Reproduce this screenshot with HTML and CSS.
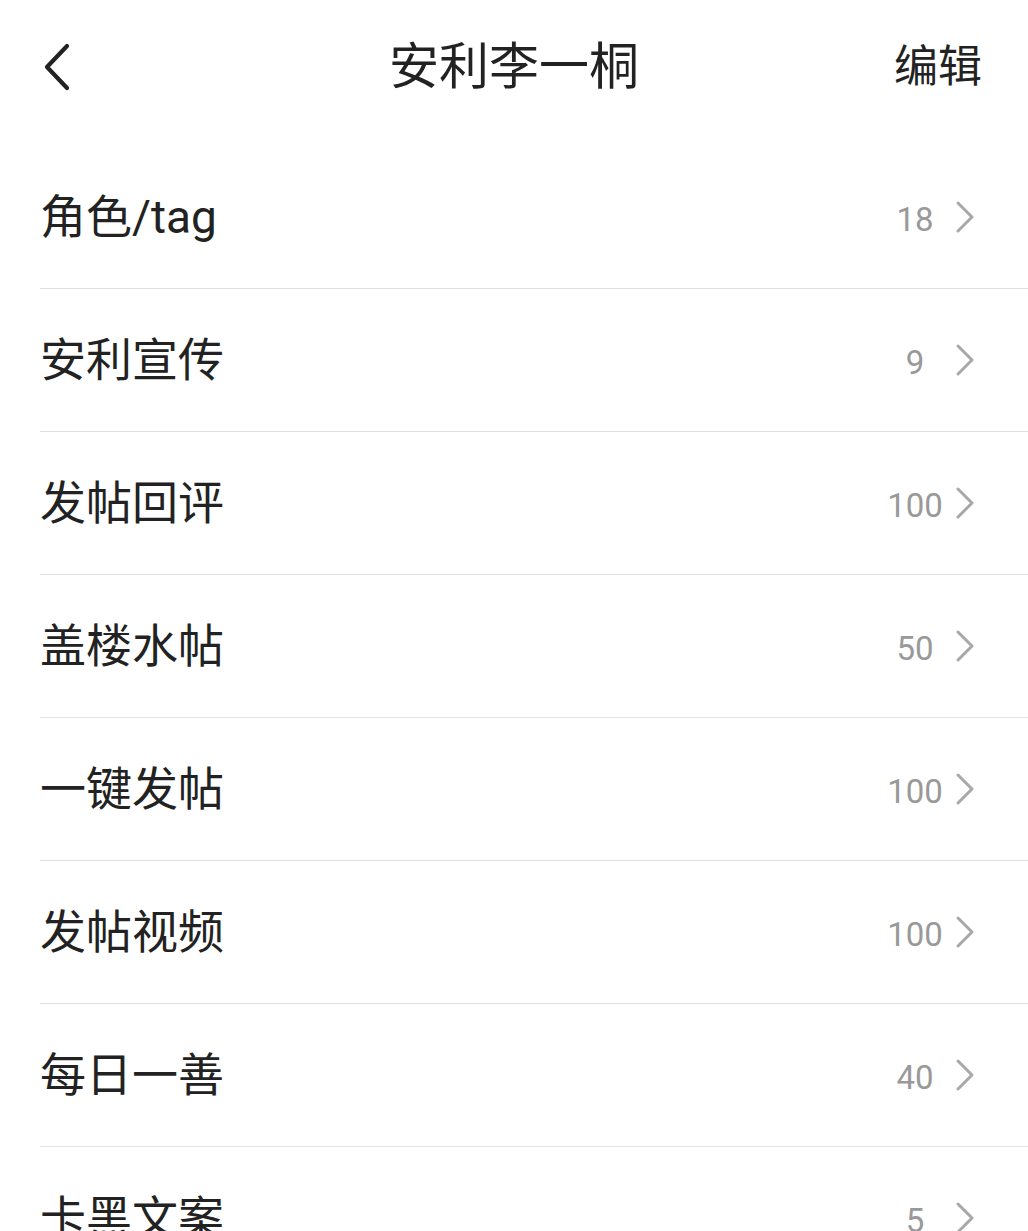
FILE: index.html
```html
<!DOCTYPE html>
<html lang="zh-CN">
<head>
    <meta charset="UTF-8">
    <meta name="viewport" content="width=device-width, initial-scale=1.0">
    <title>安利李一桐</title>
    <link rel="stylesheet" href="styles.css">
</head>
<body>

    <header class="topbar">
        <a class="back" href="#">
            <svg width="30" height="48" viewBox="0 0 30 48"><polyline points="25,3 5,24 25,45" fill="none" stroke="#222" stroke-width="4.2" stroke-linecap="round" stroke-linejoin="round"/></svg>
        </a>
        <h1 class="title">安利李一桐</h1>
        <a class="edit" href="#">编辑</a>
    </header>

    <!-- 任务列表 -->
    <ul class="list">
        <li class="row"><span class="name">角色/tag</span><span class="count">18</span><span class="arrow"><svg width="22" height="34" viewBox="0 0 22 34"><polyline points="4,3 18,17 4,31" fill="none" stroke="#a8a8a8" stroke-width="3" stroke-linecap="round" stroke-linejoin="round"/></svg></span></li>
        <li class="row"><span class="name">安利宣传</span><span class="count">9</span><span class="arrow"><svg width="22" height="34" viewBox="0 0 22 34"><polyline points="4,3 18,17 4,31" fill="none" stroke="#a8a8a8" stroke-width="3" stroke-linecap="round" stroke-linejoin="round"/></svg></span></li>
        <li class="row"><span class="name">发帖回评</span><span class="count">100</span><span class="arrow"><svg width="22" height="34" viewBox="0 0 22 34"><polyline points="4,3 18,17 4,31" fill="none" stroke="#a8a8a8" stroke-width="3" stroke-linecap="round" stroke-linejoin="round"/></svg></span></li>
        <li class="row"><span class="name">盖楼水帖</span><span class="count">50</span><span class="arrow"><svg width="22" height="34" viewBox="0 0 22 34"><polyline points="4,3 18,17 4,31" fill="none" stroke="#a8a8a8" stroke-width="3" stroke-linecap="round" stroke-linejoin="round"/></svg></span></li>
        <li class="row"><span class="name">一键发帖</span><span class="count">100</span><span class="arrow"><svg width="22" height="34" viewBox="0 0 22 34"><polyline points="4,3 18,17 4,31" fill="none" stroke="#a8a8a8" stroke-width="3" stroke-linecap="round" stroke-linejoin="round"/></svg></span></li>
        <li class="row"><span class="name">发帖视频</span><span class="count">100</span><span class="arrow"><svg width="22" height="34" viewBox="0 0 22 34"><polyline points="4,3 18,17 4,31" fill="none" stroke="#a8a8a8" stroke-width="3" stroke-linecap="round" stroke-linejoin="round"/></svg></span></li>
        <li class="row"><span class="name">每日一善</span><span class="count">40</span><span class="arrow"><svg width="22" height="34" viewBox="0 0 22 34"><polyline points="4,3 18,17 4,31" fill="none" stroke="#a8a8a8" stroke-width="3" stroke-linecap="round" stroke-linejoin="round"/></svg></span></li>
        <li class="row"><span class="name">卡黑文案</span><span class="count">5</span><span class="arrow"><svg width="22" height="34" viewBox="0 0 22 34"><polyline points="4,3 18,17 4,31" fill="none" stroke="#a8a8a8" stroke-width="3" stroke-linecap="round" stroke-linejoin="round"/></svg></span></li>
    </ul>

</body>
</html>
```

FILE: styles.css
```css
html, body { margin: 0; padding: 0; background: #fff; }
body { font-family: Roboto, "Noto Sans CJK SC", sans-serif; color: #222; height: 1231px; overflow: hidden; }

.topbar { height: 134px; display: flex; align-items: center; justify-content: space-between; padding: 0 46px 0 42px; position: relative; }
.back { display: flex; align-items: center; }
.title { position: absolute; left: 0; right: 0; text-align: center; margin: 0; font-size: 50px; font-weight: normal; line-height: 1; pointer-events: none; }
.edit { font-size: 44px; color: #222; text-decoration: none; line-height: 1; }

.list { list-style: none; margin: 12px 0 0 40px; padding: 0; }
.row { height: 142px; display: flex; align-items: center; border-bottom: 1.5px solid #e2e2e2; }
.name { flex: 1; font-size: 46px; line-height: 1; }
.count { width: 64px; text-align: center; font-size: 33px; color: #999; padding-top: 4px; margin-right: 2px; }
.arrow { display: flex; align-items: center; margin: 0 52px 0 5px; }
```
